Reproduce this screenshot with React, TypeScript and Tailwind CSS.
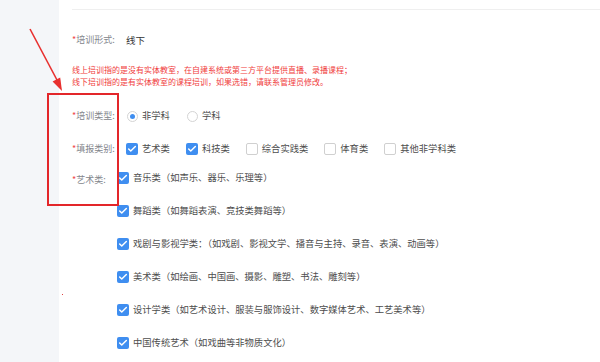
import { Check } from "lucide-react";

const font = { fontFamily: '"Noto Sans CJK SC", "Noto Sans", sans-serif' };

const categories = [
  { name: "艺术类", checked: true },
  { name: "科技类", checked: true },
  { name: "综合实践类", checked: false },
  { name: "体育类", checked: false },
  { name: "其他非学科类", checked: false },
];

const artTypes = [
  "音乐类（如声乐、器乐、乐理等）",
  "舞蹈类（如舞蹈表演、竞技类舞蹈等）",
  "戏剧与影视学类：（如戏剧、影视文学、播音与主持、录音、表演、动画等）",
  "美术类（如绘画、中国画、摄影、雕塑、书法、雕刻等）",
  "设计学类（如艺术设计、服装与服饰设计、数字媒体艺术、工艺美术等）",
  "中国传统艺术（如戏曲等非物质文化）",
];

const Box = ({ checked }: { checked: boolean }) =>
  checked ? (
    <span className="flex h-[12px] w-[12px] shrink-0 items-center justify-center rounded-[2px] bg-[#3f8ef0]">
      <Check className="h-[10px] w-[10px] text-white" strokeWidth={3.5} />
    </span>
  ) : (
    <span className="h-[12px] w-[12px] shrink-0 rounded-[2px] border border-[#d0d0d0] bg-white" />
  );

const Radio = ({ checked }: { checked: boolean }) => (
  <span className="flex h-[11px] w-[11px] shrink-0 items-center justify-center rounded-full border border-[#d4d4d4] bg-white">
    {checked && <span className="h-[5px] w-[5px] rounded-full bg-[#3f8ef0]" />}
  </span>
);

const Label = ({ text, w }: { text: string; w: string }) => (
  <span className={`${w} shrink-0 text-[9px] text-[#83868c]`}>
    <span className="text-[#f04848]">*</span>
    {text}
  </span>
);

export default function App() {
  return (
    <div className="relative flex h-[362px] w-[600px] overflow-hidden bg-white" style={font}>
      {/* left gray strip */}
      <div className="w-[59px] shrink-0 bg-[#f4f6f9]" />

      <div className="flex flex-1 flex-col pl-[13px]">
        <div className="mt-[9px] h-px bg-[#efefef]" />

        <div className="mt-[20px] flex h-[20px] items-center">
          <Label text="培训形式:" w="w-[54px]" />
          <span className="text-[9.5px] text-[#333]">线下</span>
        </div>

        <div className="mt-[14px] text-[8px] leading-[12px] text-[#f03c3c]">
          <p>线上培训指的是没有实体教室，在自建系统或第三方平台提供直播、录播课程；</p>
          <p>线下培训指的是有实体教室的课程培训，如果选错，请联系管理员修改。</p>
        </div>

        <div className="mt-[18px] flex h-[20px] items-center">
          <Label text="培训类型:" w="w-[55px]" />
          <div className="flex items-center gap-[17px] text-[9.3px] text-[#4d4d4d]">
            <label className="flex items-center gap-[4px]">
              <Radio checked />
              非学科
            </label>
            <label className="flex items-center gap-[4px]">
              <Radio checked={false} />
              学科
            </label>
          </div>
        </div>

        <div className="mt-[13px] flex h-[20px] items-center">
          <Label text="填报类别:" w="w-[54px]" />
          <div className="flex items-center gap-[16px] text-[9.3px] text-[#4d4d4d]">
            {categories.map((c) => (
              <label key={c.name} className="flex items-center gap-[4px]">
                <Box checked={c.checked} />
                {c.name}
              </label>
            ))}
          </div>
        </div>

        <div className="mt-[9px] flex">
          <div className="flex h-[20px] w-[45px] shrink-0 items-center pt-[3px]">
            <Label text="艺术类:" w="w-[45px]" />
          </div>
          <div className="flex flex-col gap-[13px] text-[9.3px] text-[#4d4d4d]">
            {artTypes.map((t) => (
              <label key={t} className="flex h-[20px] items-center gap-[4px]">
                <Box checked />
                {t}
              </label>
            ))}
          </div>
        </div>
      </div>

      {/* annotation: red frame */}
      <div className="absolute left-[47px] top-[93px] h-[113px] w-[72px] border-2 border-[#e3262a]" />

      {/* annotation: arrow */}
      <svg className="absolute left-0 top-0" width="80" height="100" viewBox="0 0 80 100">
        <line x1="30" y1="29" x2="57" y2="80" stroke="#e8302f" strokeWidth="1.6" />
        <polygon points="62,91 52.6,81.5 60.2,77.6" fill="#e8302f" />
      </svg>

      {/* stray dot */}
      <span className="absolute left-[62px] top-[294px] h-px w-px bg-[#e04040]" />
    </div>
  );
}
